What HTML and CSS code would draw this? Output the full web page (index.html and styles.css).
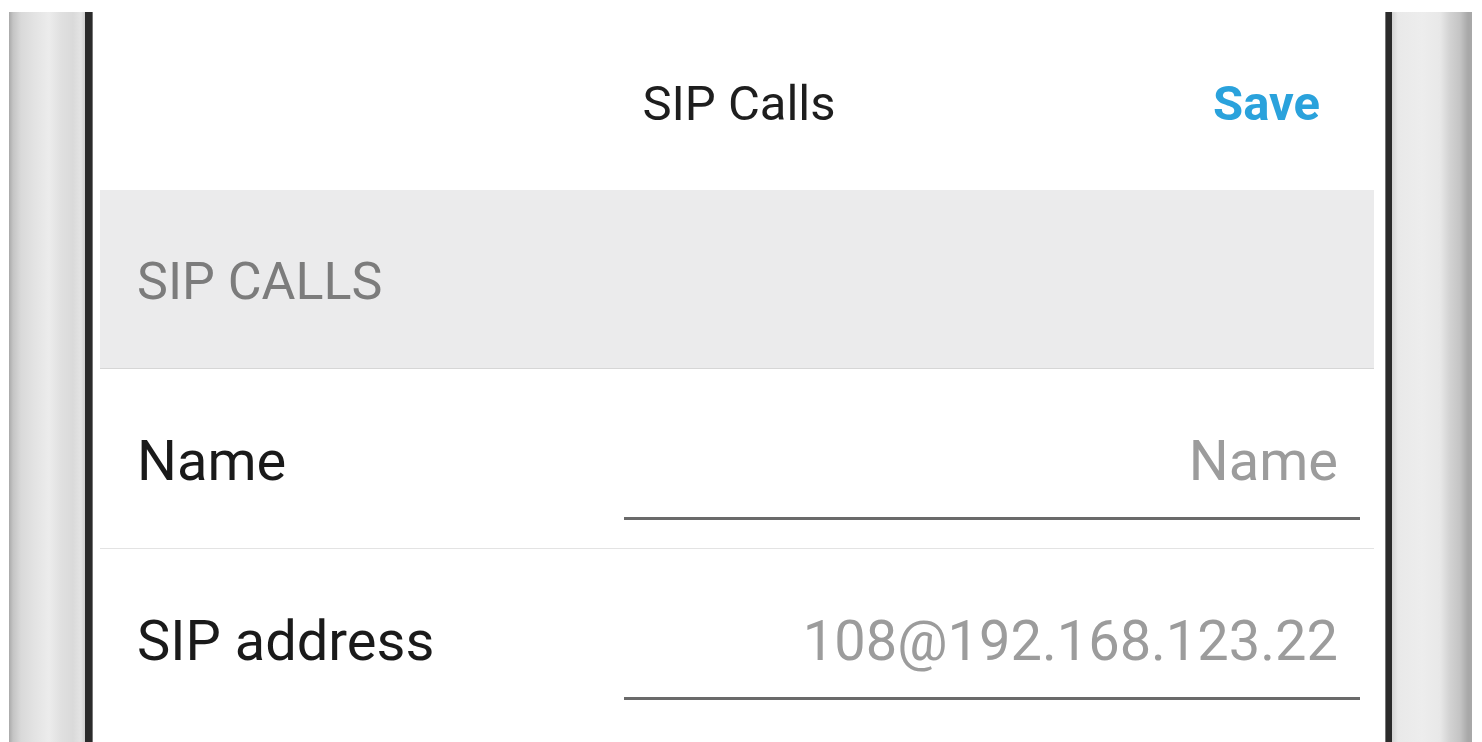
FILE: index.html
```html
<!DOCTYPE html>
<html lang="en">
<head>
    <meta charset="UTF-8">
    <title>SIP Calls</title>
    <link rel="stylesheet" href="styles.css">
</head>
<body>
    <div class="phone">
        <div class="bezel bezel-left"></div>

        <div class="screen">
            <header class="topbar">
                <span class="topbar-spacer"></span>
                <h1 class="topbar-title">SIP Calls</h1>
                <a href="#" class="topbar-action">Save</a>
            </header>

            <div class="settings">
                <div class="section-header">SIP CALLS</div>

                <div class="setting-row">
                    <label class="setting-label" for="sipName">Name</label>
                    <input class="setting-input" id="sipName" type="text" placeholder="Name">
                </div>

                <div class="setting-row">
                    <label class="setting-label" for="sipAddress">SIP address</label>
                    <input class="setting-input" id="sipAddress" type="text" placeholder="108@192.168.123.22">
                </div>
            </div>
        </div>

        <div class="bezel bezel-right"></div>
    </div>
</body>
</html>
```

FILE: styles.css
```css
* {
    margin: 0;
    padding: 0;
    box-sizing: border-box;
}

body {
    font-family: Roboto, "Noto Sans", Arial, sans-serif;
    background-color: #fff;
    color: #1c1c1c;
    overflow: hidden;
}

.phone {
    display: flex;
    height: 742px;
    padding: 12px 10px 0 9px;
}

/* Metal frame on both sides */
.bezel {
    width: 76px;
    flex-shrink: 0;
}

.bezel-left {
    background: linear-gradient(to right,
        #a9a9a9 0px, #c4c4c4 4px, #d9d9d9 12px, #e2e2e2 24px,
        #ececec 40px, #e0e0e0 52px, #dadada 64px, #e4e4e4 72px, #d0d0d0 76px);
}

.bezel-right {
    background: linear-gradient(to right,
        #d4d4d4 0px, #e9e9e9 6px, #ededed 30px, #e8e8e8 48px,
        #d2d2d2 58px, #c4c4c4 68px, #a8a8a8 76px);
    width: 80px;
}

.screen {
    flex: 1;
    display: flex;
    flex-direction: column;
    background-color: #fff;
    border-left: 7px solid #2b2b2b;
    border-right: 6px solid #2b2b2b;
    box-shadow: inset 1px 0 0 #777, inset -1px 0 0 #777;
}

.topbar {
    height: 178px;
    display: flex;
    align-items: center;
    padding: 4px 66px 0 66px;
}

.topbar-spacer {
    width: 107px;
}

.topbar-title {
    flex: 1;
    text-align: center;
    font-size: 49px;
    font-weight: 400;
    color: #1e1e1e;
}

.topbar-action {
    font-size: 49px;
    font-weight: 700;
    color: #2aa2dc;
    text-decoration: none;
}

.settings {
    margin: 0 12px 0 8px;
}

.section-header {
    height: 179px;
    background-color: #ebebec;
    border-bottom: 1px solid #d6d6d6;
    padding: 60px 0 0 37px;
    font-size: 52px;
    line-height: 64px;
    color: #7c7c7c;
}

.setting-row {
    display: flex;
    align-items: flex-start;
    justify-content: space-between;
    height: 180px;
    padding: 60px 14px 0 37px;
    border-bottom: 1px solid #e3e3e3;
}

.setting-row:last-child {
    border-bottom: none;
}

.setting-label {
    font-size: 56px;
    line-height: 64px;
    color: #1a1a1a;
}

.setting-input {
    width: 736px;
    font-family: inherit;
    font-size: 56px;
    line-height: 64px;
    text-align: right;
    padding: 0 22px 24px 0;
    border: none;
    border-bottom: 3px solid #6a6a6a;
    background: transparent;
    color: #1a1a1a;
    outline: none;
}

.setting-input::placeholder {
    color: #9c9c9c;
}
```
